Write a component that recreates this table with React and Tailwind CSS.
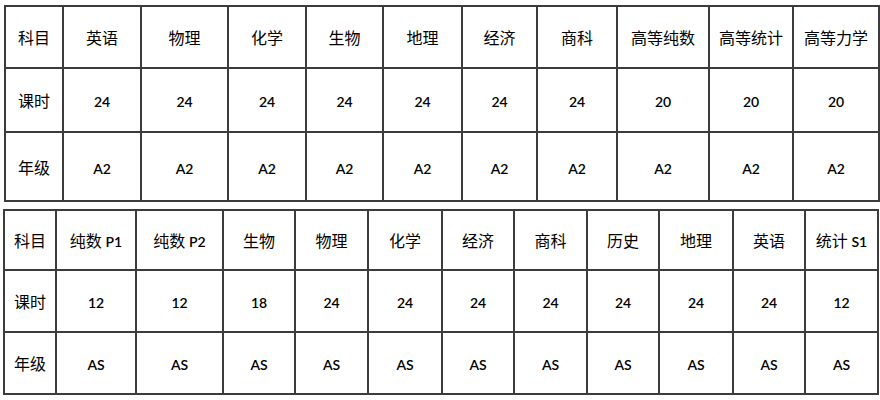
import React from "react";

const t1 = {
  widths: [58, 78, 87, 78, 77, 79, 75, 80, 92, 84, 86],
  heights: ["h-[62px]", "h-[64px]", "h-[69px]"],
  rows: [
    ["科目", "英语", "物理", "化学", "生物", "地理", "经济", "商科", "高等纯数", "高等统计", "高等力学"],
    ["课时", "24", "24", "24", "24", "24", "24", "24", "20", "20", "20"],
    ["年级", "A2", "A2", "A2", "A2", "A2", "A2", "A2", "A2", "A2", "A2"],
  ],
};

const t2 = {
  widths: [52, 80, 87, 72, 73, 74, 72, 73, 72, 74, 72, 73],
  heights: ["h-[60px]", "h-[62px]", "h-[62px]"],
  rows: [
    ["科目", "纯数 P1", "纯数 P2", "生物", "物理", "化学", "经济", "商科", "历史", "地理", "英语", "统计 S1"],
    ["课时", "12", "12", "18", "24", "24", "24", "24", "24", "24", "24", "12"],
    ["年级", "AS", "AS", "AS", "AS", "AS", "AS", "AS", "AS", "AS", "AS", "AS"],
  ],
};

// mixed cells like "纯数 P1": latin part in the smaller face
function Cell({ text, first }) {
  const m = text.match(/^(\S+) (\S+)$/);
  const latin = /^[A-Z0-9]+$/.test(text);
  if (m) {
    return (
      <span>
        <span className="text-[16px]">{m[1]}</span>{" "}
        <span className="text-[14px] font-['Lato',sans-serif] font-semibold">{m[2]}</span>
      </span>
    );
  }
  if (latin) return <span className="text-[14px] font-['Lato',sans-serif] font-semibold">{text}</span>;
  return <span className={first ? "text-[16px]" : "text-[16px]"}>{text}</span>;
}

function Table({ data, className }) {
  const total = data.widths.reduce((a, b) => a + b, 0);
  return (
    <table className={`table-fixed border-collapse ${className}`} style={{ width: total }}>
      <colgroup>
        {data.widths.map((w, i) => (
          <col key={i} style={{ width: w }} />
        ))}
      </colgroup>
      <tbody>
        {data.rows.map((row, r) => (
          <tr key={r} className={data.heights[r]}>
            {row.map((c, i) => (
              <td key={i} className="border-2 border-[#3c3c3c] text-center align-middle p-0 text-black whitespace-nowrap">
                <Cell text={c} first={i === 0} />
              </td>
            ))}
          </tr>
        ))}
      </tbody>
    </table>
  );
}

export default function App() {
  return (
    <div className="w-[880px] h-[400px] bg-white overflow-hidden pt-[5px] pl-[3px] font-['Noto_Sans_CJK_SC','Noto_Sans',sans-serif]">
      <Table data={t1} className="ml-px" />
      <Table data={t2} className="mt-[7px]" />
    </div>
  );
}
